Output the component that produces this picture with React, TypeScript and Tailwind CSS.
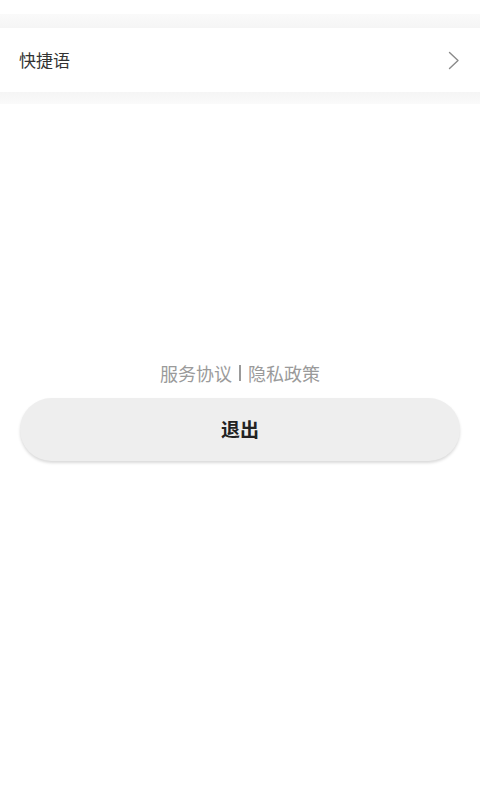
import React from 'react';

const font = { fontFamily: '"Noto Sans CJK SC", "Noto Sans", sans-serif' };

const App = () => {
  return (
    <div className="w-[480px] h-[800px] bg-white flex flex-col" style={font}>
      <div className="h-[14px] bg-white"></div>
      <div className="h-[14px] bg-gradient-to-b from-[#fafafa] to-[#f5f5f5]"></div>
      <div className="h-[64px] bg-white flex items-center justify-between pl-[19px] pr-[20px]">
        <span className="text-[17px] text-[#333333]">快捷语</span>
        <svg width="12" height="19" viewBox="0 0 12 19" fill="none">
          <path d="M1.5 1.5 L10 9.5 L1.5 17.5" stroke="#8a8a8a" strokeWidth="1.4" strokeLinecap="round" strokeLinejoin="round" />
        </svg>
      </div>
      <div className="h-[12px] bg-gradient-to-b from-[#f5f5f5] to-[#fafafa]"></div>
      <div className="flex-1 flex flex-col items-center">
        <div className="mt-[260px] flex items-center text-[18px] text-[#9a9a9a] leading-none">
          <span>服务协议</span>
          <span className="mx-[7px] w-[2px] h-[16px] bg-[#9a9a9a]"></span>
          <span>隐私政策</span>
        </div>
        <button className="mt-[16px] w-[440px] h-[63px] rounded-full bg-[#eeeeee] shadow-[0_2px_3px_rgba(0,0,0,0.15)] flex items-center justify-center">
          <span className="text-[19px] font-bold text-[#222222]">退出</span>
        </button>
      </div>
    </div>
  );
};

export default App;
